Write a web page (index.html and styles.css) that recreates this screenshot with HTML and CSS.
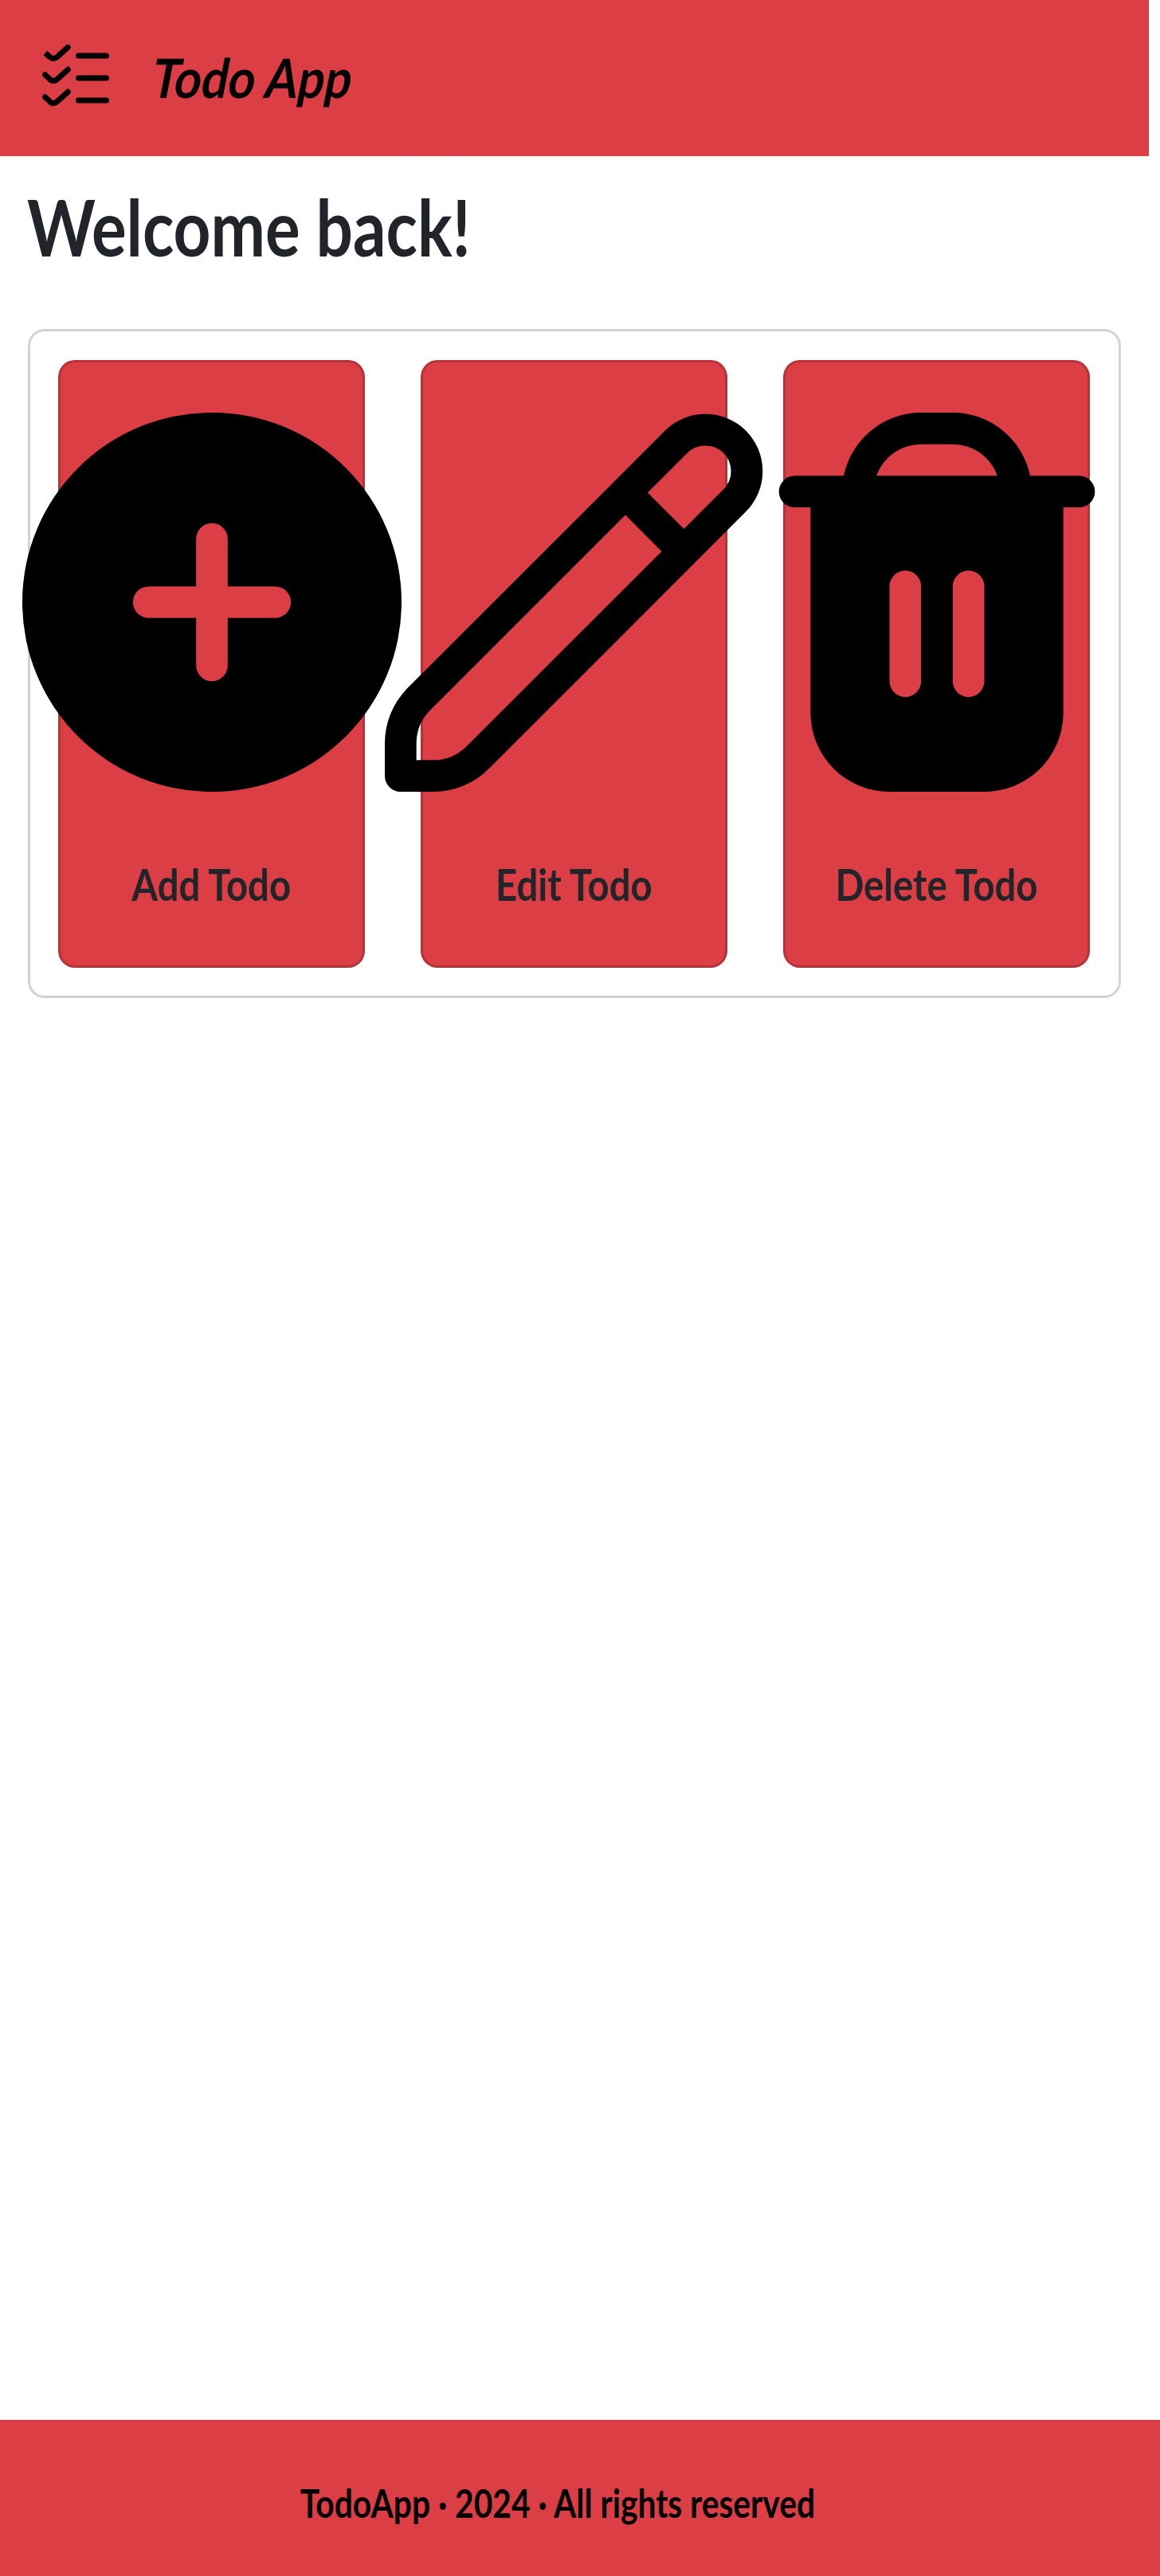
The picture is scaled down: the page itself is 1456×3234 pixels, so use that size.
FILE: index.html
```
<!DOCTYPE html>
<html lang="en">
<head>
<meta charset="utf-8">
<title>Todo App</title>
<link rel="stylesheet" href="styles.css">
</head>
<body>
<header class="navbar">
  <svg class="navbar-icon" viewBox="0 0 24 24" aria-hidden="true">
    <g fill="none" stroke="currentColor" stroke-width="2">
      <g stroke-linecap="round">
        <path d="M13 4h10M13 12h10M13 20h10"/>
        <path d="M1 10.8 2.6 12.3Q4 13.7 5.4 12.4L9.2 8.95M1 18.8 2.6 20.3Q4 21.7 5.4 20.4L9.2 16.95M4 5Q4.7 5 5.4 4.4L9.2 .95"/>
      </g>
      <path d="M1.1 3 2.6 4.3Q3.3 5 4.1 5"/>
    </g>
  </svg>
  <span class="brand">Todo App</span>
</header>
<main class="content">
  <h1 class="welcome"><span class="welcome-text">Welcome back!</span></h1>
  <section class="actions">
    <a class="action">
      <svg class="action-icon" viewBox="0 0 24 24" aria-hidden="true"><path fill-rule="evenodd" d="M12 0a12 12 0 1 0 0 24 12 12 0 0 0 0-24ZM16 13h-3v3a1 1 0 0 1-2 0v-3H8a1 1 0 0 1 0-2h3V8a1 1 0 0 1 2 0v3h3a1 1 0 0 1 0 2Z"/></svg>
      <span class="action-label">Add Todo</span>
    </a>
    <a class="action">
      <svg class="action-icon" viewBox="0 0 24 24" aria-hidden="true"><path d="M22.853,1.148a3.626,3.626,0,0,0-5.124,0L1.465,17.412A4.968,4.968,0,0,0,0,20.947V23a1,1,0,0,0,1,1H3.053a4.966,4.966,0,0,0,3.535-1.464L22.853,6.271A3.626,3.626,0,0,0,22.853,1.148ZM5.174,21.122A3.022,3.022,0,0,1,3.053,22H2V20.947a2.98,2.98,0,0,1,.879-2.121L15.222,6.483l2.3,2.3ZM21.438,4.857,18.932,7.364l-2.3-2.295,2.507-2.507a1.623,1.623,0,1,1,2.295,2.3Z"/></svg>
      <span class="action-label">Edit Todo</span>
    </a>
    <a class="action">
      <svg class="action-icon" viewBox="0 0 24 24" aria-hidden="true"><path fill-rule="evenodd" d="M21 4H17.9A5.009 5.009 0 0 0 13 0H11A5.009 5.009 0 0 0 6.1 4H3A1 1 0 0 0 3 6H4V19A5.006 5.006 0 0 0 9 24H15A5.006 5.006 0 0 0 20 19V6H21A1 1 0 0 0 21 4ZM11 2H13A3.006 3.006 0 0 1 15.829 4H8.171A3.006 3.006 0 0 1 11 2ZM11 17A1 1 0 0 1 9 17V11A1 1 0 0 1 11 11ZM15 17A1 1 0 0 1 13 17V11A1 1 0 0 1 15 11Z"/></svg>
      <span class="action-label">Delete Todo</span>
    </a>
  </section>
</main>
<footer class="footer"><span class="footer-text">TodoApp · 2024 · All rights reserved</span></footer>
</body>
</html>
```
FILE: styles.css
```
* { box-sizing: border-box; }

body {
  margin: 0;
  min-height: 3234px;
  display: flex;
  flex-direction: column;
  background: #fff;
  color: #212529;
  font-family: Lato, "Open Sans", sans-serif;
  font-weight: 700;
}

.navbar {
  width: 1442px;
  height: 196px;
  padding-left: 52.5px;
  display: flex;
  align-items: center;
  background: #dc3e45;
  color: #000;
}

.navbar-icon {
  width: 84px;
  height: 84px;
}

.brand {
  margin-left: 50px;
  padding-bottom: 2px;
  font-size: 68px;
  line-height: 82px;
  transform: skewX(-11deg) scaleX(.871);
  transform-origin: 0 80%;
}

.content {
  flex: 1;
  width: 1442px;
  padding: 31px 35px 0;
}

.welcome {
  margin: 0 0 71px;
  font-size: 97px;
  font-weight: 700;
  line-height: 115px;
}

.welcome-text {
  display: inline-block;
  margin-left: -1px;
  transform: scaleX(.843);
  transform-origin: left;
}

.actions {
  height: 840px;
  padding: 35.5px 35px;
  display: flex;
  gap: 70px;
  border: 3px solid #d2d2d2;
  border-radius: 21px;
}

.action {
  width: 385px;
  padding-top: 63.5px;
  display: flex;
  flex-direction: column;
  align-items: center;
  border: 3px solid rgba(0, 0, 0, .175);
  border-radius: 21px;
  background: #dc3e45;
}

.action-icon {
  flex: none;
  width: 476px;
  height: 476px;
  fill: #000;
}

.action-label {
  margin-top: 84px;
  font-size: 54.5px;
  line-height: 65px;
  white-space: nowrap;
  transform: scaleX(.867);
}

.footer {
  height: 196px;
  padding: 12px 57px 0 0;
  display: flex;
  align-items: center;
  justify-content: center;
  background: #dc3e45;
  color: #000;
}

.footer-text {
  font-size: 49px;
  transform: scaleX(.831);
}
```
